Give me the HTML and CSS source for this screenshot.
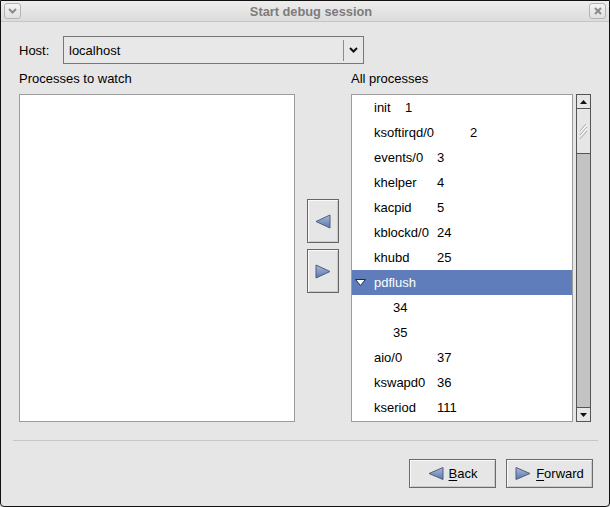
FILE: index.html
```html
<!DOCTYPE html>
<html>
<head>
<meta charset="utf-8">
<link rel="stylesheet" href="styles.css">
</head>
<body>
<div class="window">
  <div class="titlebar">
    <span class="tbtn"><svg width="9" height="6" viewBox="0 0 9 6"><polyline points="1,1 4.5,4.5 8,1" fill="none" stroke="#8a8a8a" stroke-width="2"/></svg></span>
    <span class="title">Start debug session</span>
    <span class="tbtn"><svg width="8" height="8" viewBox="0 0 8 8"><path d="M1,1 L7,7 M7,1 L1,7" stroke="#8a8a8a" stroke-width="2"/></svg></span>
  </div>
  <div class="content">
    <div class="host-row">
      <span class="host-label">Host:</span>
      <div class="combo">
        <span class="combo-text">localhost</span>
        <span class="combo-sep"></span>
        <span class="combo-arrow"><svg width="9" height="6" viewBox="0 0 9 6"><polyline points="1,1 4.5,4.5 8,1" fill="none" stroke="#111" stroke-width="2"/></svg></span>
      </div>
    </div>
    <div class="lists">
      <div class="panel panel-left">
        <div class="panel-label">Processes to watch</div>
        <div class="listbox"></div>
      </div>
      <div class="movers">
        <button class="mover"><svg width="16" height="15" viewBox="0 0 16 15"><defs><linearGradient id="ga" x1="0" y1="0" x2="0" y2="1"><stop offset="0" stop-color="#a9bbdd"/><stop offset="1" stop-color="#5b76a8"/></linearGradient></defs><polygon points="1,7.5 15,1 15,14" fill="url(#ga)" stroke="#4d5e80" stroke-width="1"/></svg></button>
        <button class="mover"><svg width="16" height="15" viewBox="0 0 16 15"><defs><linearGradient id="gb" x1="0" y1="0" x2="0" y2="1"><stop offset="0" stop-color="#a9bbdd"/><stop offset="1" stop-color="#5b76a8"/></linearGradient></defs><polygon points="15,7.5 1,1 1,14" fill="url(#gb)" stroke="#4d5e80" stroke-width="1"/></svg></button>
      </div>
      <div class="panel panel-right">
        <div class="panel-label">All processes</div>
        <div class="tree-wrap">
          <div class="tree">
            <div class="row"><span class="name name-narrow">init</span><span>1</span></div>
            <div class="row"><span class="name name-wide">ksoftirqd/0</span><span>2</span></div>
            <div class="row"><span class="name">events/0</span><span>3</span></div>
            <div class="row"><span class="name">khelper</span><span>4</span></div>
            <div class="row"><span class="name">kacpid</span><span>5</span></div>
            <div class="row"><span class="name">kblockd/0</span><span>24</span></div>
            <div class="row"><span class="name">khubd</span><span>25</span></div>
            <div class="row row-selected"><span class="expander"><svg width="11" height="7" viewBox="0 0 11 7"><polygon points="0.5,0.5 10.5,0.5 5.5,6.5" fill="#fff" stroke="#1c2a48" stroke-width="1"/></svg></span><span class="name">pdflush</span></div>
            <div class="row row-child"><span>34</span></div>
            <div class="row row-child"><span>35</span></div>
            <div class="row"><span class="name">aio/0</span><span>37</span></div>
            <div class="row"><span class="name">kswapd0</span><span>36</span></div>
            <div class="row"><span class="name">kseriod</span><span>111</span></div>
          </div>
          <div class="scrollbar">
            <div class="sb-btn sb-up"><svg width="7" height="4" viewBox="0 0 7 4"><polygon points="0,4 7,4 3.5,0" fill="#111"/></svg></div>
            <div class="sb-thumb"><svg width="9" height="17" viewBox="0 0 9 17"><path d="M1,8 L7,1 M1,12 L8,4 M1,16 L8,8" stroke="#a8a8a8" stroke-width="1"/><path d="M2,8.5 L8,1.5 M2,12.5 L8,5.5" stroke="#fff" stroke-width="1"/></svg></div>
            <div class="sb-track"></div>
            <div class="sb-btn sb-down"><svg width="7" height="4" viewBox="0 0 7 4"><polygon points="0,0 7,0 3.5,4" fill="#111"/></svg></div>
          </div>
        </div>
      </div>
    </div>
  </div>
  <div class="separator"></div>
  <div class="actions">
    <button class="action"><svg width="16" height="13" viewBox="0 0 16 13"><defs><linearGradient id="gc" x1="0" y1="0" x2="0" y2="1"><stop offset="0" stop-color="#a9bbdd"/><stop offset="1" stop-color="#5b76a8"/></linearGradient></defs><polygon points="1,6.5 15,0.5 15,12.5" fill="url(#gc)" stroke="#4d5e80" stroke-width="1"/></svg><span><u>B</u>ack</span></button>
    <button class="action"><svg width="16" height="13" viewBox="0 0 16 13"><defs><linearGradient id="gd" x1="0" y1="0" x2="0" y2="1"><stop offset="0" stop-color="#a9bbdd"/><stop offset="1" stop-color="#5b76a8"/></linearGradient></defs><polygon points="15,6.5 1,0.5 1,12.5" fill="url(#gd)" stroke="#4d5e80" stroke-width="1"/></svg><span><u>F</u>orward</span></button>
  </div>
</div>
</body>
</html>
```

FILE: styles.css
```css
* { box-sizing: border-box; }
html, body { margin: 0; padding: 0; background: #e6e6e6; }
body { font-family: "Liberation Sans", Arial, sans-serif; font-size: 13px; color: #000; }

.window {
  width: 610px;
  height: 507px;
  border: 1px solid #111;
  border-radius: 0 0 4px 4px;
  background: #e6e6e6;
  display: flex;
  flex-direction: column;
  overflow: hidden;
}

.titlebar {
  height: 21px;
  flex: none;
  display: flex;
  align-items: center;
  padding: 0 3px;
  background: linear-gradient(#ededed, #dcdcdc);
  border-bottom: 1px solid #c6c6c6;
}
.tbtn {
  width: 17px;
  height: 16px;
  border: 1px solid #b3b3b3;
  border-radius: 3px;
  background: linear-gradient(#f4f4f4, #e0e0e0);
  display: flex;
  align-items: center;
  justify-content: center;
  flex: none;
}
.title {
  flex: 1;
  text-align: center;
  padding-left: 12px;
  font-weight: bold;
  font-size: 12.8px;
  color: #7c7c7c;
}

.content { padding: 14px 17px 0 18px; }

.host-row { display: flex; align-items: center; height: 28px; }
.host-label { width: 44px; }
.combo {
  width: 301px;
  height: 28px;
  border: 1px solid #767676;
  background: #e8e8e8;
  display: flex;
  align-items: center;
}
.combo-text { flex: 1; padding-left: 5px; }
.combo-sep { width: 1px; height: 21px; background: #8c8c8c; }
.combo-arrow { width: 19px; display: flex; justify-content: center; }

.lists { display: grid; grid-template-columns: 276px 56px 240px; }
.panel-label { padding: 7px 0 7px; line-height: 16px; }
.listbox {
  height: 328px;
  background: #fff;
  border: 1px solid #9c9c9c;
}

.movers {
  display: flex;
  flex-direction: column;
  gap: 6px;
  padding-top: 135px;
  padding-left: 12px;
}
.mover {
  width: 32px;
  height: 44px;
  margin: 0;
  padding: 0;
  border: 1px solid #666;
  background: #e6e6e6;
  box-shadow: inset 1px 1px #fafafa, inset -1px -1px #cacaca;
  display: flex;
  align-items: center;
  justify-content: center;
}

.tree-wrap { display: flex; gap: 3px; height: 328px; }
.tree {
  width: 222px;
  background: #fff;
  border: 1px solid #9c9c9c;
  overflow: hidden;
}
.row {
  height: 25px;
  line-height: 25px;
  display: flex;
  align-items: center;
  padding-left: 22px;
  white-space: nowrap;
}
.name { width: 63px; }
.name-narrow { width: 31px; }
.name-wide { width: 96px; }
.row-selected { background: #5e7dba; color: #fff; padding-left: 0; }
.expander { width: 22px; display: flex; align-items: center; padding-left: 3px; }
.row-child { padding-left: 41px; }

.scrollbar {
  width: 15px;
  border: 1px solid #555;
  background: #c3c3c3;
  display: flex;
  flex-direction: column;
}
.sb-btn {
  height: 13px;
  flex: none;
  background: #e6e6e6;
  display: flex;
  align-items: center;
  justify-content: center;
}
.sb-up { border-bottom: 1px solid #555; height: 14px; }
.sb-down { border-top: 1px solid #555; height: 14px; }
.sb-thumb {
  height: 45px;
  flex: none;
  background: #e6e6e6;
  border-bottom: 1px solid #555;
  display: flex;
  align-items: center;
  justify-content: center;
}
.sb-track { flex: 1; }

.separator {
  height: 1px;
  background: #c6c6c6;
  margin: 18px 11px 0 12px;
  flex: none;
}

.actions {
  display: flex;
  justify-content: flex-end;
  gap: 10px;
  padding: 18px 16px 0 0;
}
.action {
  width: 87px;
  height: 29px;
  margin: 0;
  padding: 0;
  border: 1px solid #6a6a6a;
  background: #e6e6e6;
  box-shadow: inset 1px 1px #fafafa, inset -1px -1px #cacaca;
  display: flex;
  align-items: center;
  justify-content: center;
  gap: 5px;
  font-family: "Liberation Sans", Arial, sans-serif;
  font-size: 13px;
  color: #000;
}
.action u { text-decoration-thickness: 1px; text-underline-offset: 2px; }
```
